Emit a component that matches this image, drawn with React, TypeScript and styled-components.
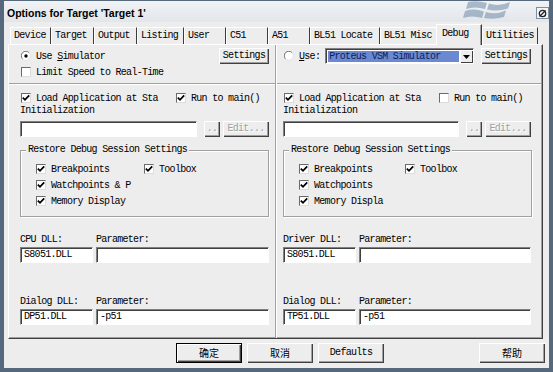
import React from 'react';
import styled, { createGlobalStyle } from 'styled-components';

const FACE = '#ededed';
const FRAME = '#56697c';

const GlobalStyle = createGlobalStyle`
  html, body { margin: 0; padding: 0; background: ${FACE}; }
  * { box-sizing: border-box; }
`;

const Window = styled.div`
  width: 553px;
  height: 372px;
  display: flex;
  flex-direction: column;
  background: ${FACE};
  border-left: 4px solid ${FRAME};
  border-right: 4px solid ${FRAME};
  border-bottom: 4px solid ${FRAME};
  font-family: "Liberation Mono", monospace;
  font-size: 10px;
  letter-spacing: -0.7px;
  color: #000;
  overflow: hidden;
`;

const TitleBar = styled.div`
  height: 22px;
  flex: none;
  display: flex;
  align-items: center;
  padding-left: 3px;
  border-top: 1px solid ${FRAME};
  background: linear-gradient(#f1f3f5, #e2e6ea);
`;

const Title = styled.div`
  font-family: "Liberation Sans", Arial, sans-serif;
  font-weight: bold;
  font-size: 10.5px;
  letter-spacing: 0;
  padding-top: 2px;
`;

const TitleIcons = styled.div`
  margin-left: auto;
  display: flex;
  align-items: flex-start;
  align-self: stretch;
  gap: 18px;
`;

const TinyButton = styled.div`
  width: 13px;
  height: 12px;
  margin-top: 6px;
  background: #f4f4f4;
  border: 1px solid #7d8fa2;
  display: flex;
  align-items: center;
  justify-content: center;
`;

const TabRow = styled.div`
  height: 19px;
  margin-top: 3px;
  flex: none;
  display: flex;
  align-items: flex-end;
  padding-left: 6px;
`;

const Tab = styled.div<{ $w: number; $active?: boolean }>`
  width: ${(p) => p.$w + (p.$active ? 2 : 0)}px;
  height: ${(p) => (p.$active ? 21 : 17)}px;
  margin-left: ${(p) => (p.$active ? -2 : 0)}px;
  margin-bottom: ${(p) => (p.$active ? -1 : 0)}px;
  padding-left: ${(p) => (p.$active ? 5 : 3)}px;
  padding-top: ${(p) => (p.$active ? 2 : 1)}px;
  line-height: 14px;
  white-space: nowrap;
  position: relative;
  z-index: ${(p) => (p.$active ? 2 : 0)};
  background: ${FACE};
  border-top: 1px solid #fff;
  border-left: 1px solid #fff;
  border-right: 1px solid #3c3c3c;
  box-shadow: ${(p) => (p.$active ? 'inset -1px 0 #a0a0a0' : 'none')};
`;

const Panel = styled.div`
  flex: none;
  height: 295px;
  margin: 0 6px 0 4px;
  display: flex;
  border-top: 1px solid #fff;
  border-left: 1px solid #fff;
  border-right: 1px solid #404040;
  border-bottom: 1px solid #404040;
  box-shadow: inset -1px -1px #a0a0a0;
`;

const Column = styled.div<{ $w: number }>`
  width: ${(p) => p.$w}px;
  flex: none;
  display: flex;
  flex-direction: column;
`;

const Divider = styled.div`
  width: 2px;
  flex: none;
  border-left: 1px solid #a0a0a0;
  border-right: 1px solid #fff;
`;

const Section = styled.div<{ $l: number; $r: number; $h?: number }>`
  padding: 3px ${(p) => p.$r}px 0 ${(p) => p.$l}px;
  height: ${(p) => (p.$h ? `${p.$h}px` : 'auto')};
  flex: ${(p) => (p.$h ? 'none' : '1')};
  display: flex;
  flex-direction: column;
`;

const HSep = styled.div`
  height: 2px;
  flex: none;
  border-top: 1px solid #a0a0a0;
  border-bottom: 1px solid #fff;
`;

const Row = styled.div<{ $h?: number; $mt?: number }>`
  display: flex;
  align-items: center;
  height: ${(p) => p.$h ?? 16}px;
  margin-top: ${(p) => p.$mt ?? 0}px;
  flex: none;
`;

const SplitRow = styled.div<{ $mt?: number }>`
  display: grid;
  grid-template-columns: 155px auto;
  align-items: center;
  height: 14px;
  margin-top: ${(p) => p.$mt ?? 0}px;
  flex: none;
`;

const Text = styled.div<{ $mt?: number }>`
  height: 14px;
  line-height: 14px;
  margin-top: ${(p) => p.$mt ?? 0}px;
  white-space: nowrap;
  flex: none;
`;

const LabelRow = styled.div<{ $mt?: number }>`
  display: grid;
  grid-template-columns: 73px 1fr;
  column-gap: 3px;
  height: 14px;
  line-height: 14px;
  margin-top: ${(p) => p.$mt ?? 0}px;
  flex: none;
`;

const FieldRow = styled.div`
  display: grid;
  grid-template-columns: 73px 1fr;
  column-gap: 3px;
  height: 16px;
  flex: none;
`;

const Option = styled.label`
  display: flex;
  align-items: center;
  gap: 5px;
  white-space: nowrap;
  height: 16px;
`;

const CheckBox = styled.span`
  width: 10px;
  height: 10px;
  flex: none;
  background: #fff;
  border-top: 1px solid #6a6a6a;
  border-left: 1px solid #6a6a6a;
  border-bottom: 1px solid #dcdcdc;
  border-right: 1px solid #dcdcdc;
  display: flex;
  align-items: center;
  justify-content: center;
  margin-left: 1px;
`;

const Field = styled.div`
  height: 16px;
  background: #fff;
  border-top: 1px solid #808080;
  border-left: 1px solid #808080;
  border-bottom: 1px solid #fff;
  border-right: 1px solid #fff;
  box-shadow: inset 1px 1px #404040;
  padding-left: 3px;
  line-height: 14px;
  white-space: nowrap;
  overflow: hidden;
`;

const Button = styled.button<{ $w?: number; $h?: number; $disabled?: boolean; $default?: boolean }>`
  width: ${(p) => p.$w ?? 50}px;
  height: ${(p) => p.$h ?? 16}px;
  flex: none;
  padding: 0;
  background: ${FACE};
  font: inherit;
  letter-spacing: inherit;
  color: ${(p) => (p.$disabled ? '#a0a0a0' : '#000')};
  text-shadow: ${(p) => (p.$disabled ? '1px 1px #fff' : 'none')};
  border: ${(p) => (p.$default ? '1px solid #000' : 'none')};
  box-shadow: inset 1px 1px #fff, inset -1px -1px #404040, inset -2px -2px #a0a0a0;
  line-height: 14px;
  cursor: default;
`;

const CjkButton = styled(Button)`
  font-family: "Noto Sans CJK SC", sans-serif;
  font-size: 10px;
  letter-spacing: 0;
`;

const Combo = styled.div`
  width: 149px;
  height: 16px;
  margin-left: 5px;
  display: flex;
  background: #fff;
  border-top: 1px solid #808080;
  border-left: 1px solid #808080;
  border-bottom: 1px solid #fff;
  border-right: 1px solid #fff;
  box-shadow: inset 1px 1px #404040;
  padding: 2px 1px 1px 2px;
`;

const Selected = styled.div`
  flex: 1;
  background: #6a89d2;
  color: #0c1f5c;
  line-height: 12px;
  padding-left: 1px;
  white-space: nowrap;
`;

const ArrowBtn = styled.div`
  width: 13px;
  margin: -1px -1px -1px 1px;
  background: ${FACE};
  box-shadow: inset 1px 1px #fff, inset -1px -1px #404040;
  display: flex;
  align-items: center;
  justify-content: center;
`;

const Group = styled.div<{ $col: number }>`
  position: relative;
  width: 249px;
  height: 67px;
  margin-top: 13px;
  flex: none;
  border: 1px solid #a0a0a0;
  box-shadow: 1px 1px #fff, inset 1px 1px #fff;
  display: grid;
  grid-template-columns: ${(p) => p.$col}px 1fr;
  grid-auto-rows: 16px;
  padding: 10px 0 0 14px;
  align-content: start;
`;

const Legend = styled.span`
  position: absolute;
  top: -8px;
  left: 5px;
  padding: 0 2px;
  background: ${FACE};
  line-height: 14px;
  white-space: nowrap;
`;

const ButtonRow = styled.div`
  flex: 1;
  display: flex;
  gap: 5px;
  padding: 4px 4px 0 172px;
`;

const Spacer = styled.div`
  flex: 1;
`;

const Check = ({ on }: { on?: boolean }) => (
  <CheckBox>
    {on && (
      <svg width="8" height="8" viewBox="0 0 8 8">
        <polyline points="0.8,3.6 3,5.8 7.2,1.4" fill="none" stroke="#000" strokeWidth="1.8" />
      </svg>
    )}
  </CheckBox>
);

const Radio = ({ on }: { on?: boolean }) => (
  <svg width="10" height="10" viewBox="0 0 10 10" style={{ flex: 'none', marginLeft: 1 }}>
    <circle cx="5" cy="5" r="4.4" fill="#fff" />
    <path d="M1.6 8 A4.4 4.4 0 0 1 8 1.6" fill="none" stroke="#707070" strokeWidth="1" />
    <path d="M8 1.6 A4.4 4.4 0 0 1 1.6 8" fill="none" stroke="#e0e0e0" strokeWidth="1" />
    {on && <circle cx="5" cy="5" r="1.7" fill="#000" />}
  </svg>
);

const Opt = ({ on, children }: { on?: boolean; children: React.ReactNode }) => (
  <Option>
    <Check on={on} />
    <span>{children}</span>
  </Option>
);

const WinLogo = () => (
  <svg width="58" height="18" viewBox="0 0 58 18">
    <g fill="#7893b0" opacity="0.6">
      <path d="M8 1 Q17 -1 27 2 L25 8 Q15 5 6 8 Z" />
      <path d="M29 2.5 Q39 6 50 1 L48 7.5 Q37 11 27 8.5 Z" />
      <path d="M5 10 Q14 7 24 10.5 L22 17 Q12 14 3 17 Z" />
      <path d="M26 11 Q36 14 46 9.5 L44 16 Q34 19 24 17 Z" />
    </g>
  </svg>
);

type Side = { right?: boolean };

const LowerPart = ({ right }: Side) => (
  <Section $l={right ? 6 : 11} $r={right ? 10 : 6}>
    <SplitRow $mt={2}>
      <Opt on>Load Application at Sta</Opt>
      <Opt on={!right}>Run to main()</Opt>
    </SplitRow>
    <Text>Initialization</Text>
    <Row $mt={3}>
      <Field style={{ width: 177 }} />
      <Button $w={16} $disabled style={{ marginLeft: 7 }}>..</Button>
      <Button $w={46} $disabled style={{ marginLeft: 3 }}>Edit...</Button>
    </Row>
    <Group $col={right ? 106 : 108}>
      <Legend>Restore Debug Session Settings</Legend>
      <Opt on>Breakpoints</Opt>
      <Opt on>Toolbox</Opt>
      <Opt on>{right ? 'Watchpoints' : 'Watchpoints & P'}</Opt>
      <span />
      <Opt on>{right ? 'Memory Displa' : 'Memory Display'}</Opt>
    </Group>
    <LabelRow $mt={16}>
      <span>{right ? 'Driver DLL:' : 'CPU DLL:'}</span>
      <span>Parameter:</span>
    </LabelRow>
    <FieldRow>
      <Field>S8051.DLL</Field>
      <Field />
    </FieldRow>
    <LabelRow $mt={32}>
      <span>Dialog DLL:</span>
      <span>Parameter:</span>
    </LabelRow>
    <FieldRow>
      <Field>{right ? 'TP51.DLL' : 'DP51.DLL'}</Field>
      <Field>-p51</Field>
    </FieldRow>
  </Section>
);

const TABS: [string, number][] = [
  ['Device', 41],
  ['Target', 43],
  ['Output', 43],
  ['Listing', 47],
  ['User', 42],
  ['C51', 42],
  ['A51', 42],
  ['BL51 Locate', 70],
  ['BL51 Misc', 58],
  ['Debug', 44],
  ['Utilities', 56],
];

export default function App() {
  return (
    <>
      <GlobalStyle />
      <Window>
        <TitleBar>
          <Title>Options for Target 'Target 1'</Title>
          <TitleIcons>
            <WinLogo />
            <TinyButton>
              <svg width="9" height="9" viewBox="0 0 9 9">
                <circle cx="4.5" cy="4.5" r="3.2" fill="none" stroke="#222" strokeWidth="1.3" />
                <line x1="1.5" y1="7.5" x2="7.5" y2="1.5" stroke="#222" strokeWidth="1.3" />
              </svg>
            </TinyButton>
          </TitleIcons>
        </TitleBar>

        <TabRow>
          {TABS.map(([name, w]) => (
            <Tab key={name} $w={w} $active={name === 'Debug'}>
              {name}
            </Tab>
          ))}
        </TabRow>

        <Panel>
          <Column $w={266}>
            <Section $l={11} $r={6} $h={38}>
              <Row>
                <Option>
                  <Radio on />
                  <span>
                    Use <u>S</u>imulator
                  </span>
                </Option>
                <Spacer />
                <Button $w={50}>Settings</Button>
              </Row>
              <Row $h={14} $mt={1}>
                <Opt>Limit Speed to Real-Time</Opt>
              </Row>
            </Section>
            <HSep />
            <LowerPart />
          </Column>
          <Divider />
          <Column $w={264}>
            <Section $l={6} $r={10} $h={38}>
              <Row>
                <Option>
                  <Radio />
                  <span>
                    <u>U</u>se:
                  </span>
                </Option>
                <Combo>
                  <Selected>Proteus VSM Simulator</Selected>
                  <ArrowBtn>
                    <svg width="7" height="4" viewBox="0 0 7 4">
                      <path d="M0 0 H7 L3.5 4 Z" fill="#000" />
                    </svg>
                  </ArrowBtn>
                </Combo>
                <Spacer />
                <Button $w={50}>Settings</Button>
              </Row>
            </Section>
            <HSep />
            <LowerPart right />
          </Column>
        </Panel>

        <ButtonRow>
          <CjkButton $w={66} $h={20} $default>确定</CjkButton>
          <CjkButton $w={66} $h={20}>取消</CjkButton>
          <Button $w={66} $h={20}>Defaults</Button>
          <Spacer />
          <CjkButton $w={66} $h={20}>帮助</CjkButton>
        </ButtonRow>
      </Window>
    </>
  );
}
